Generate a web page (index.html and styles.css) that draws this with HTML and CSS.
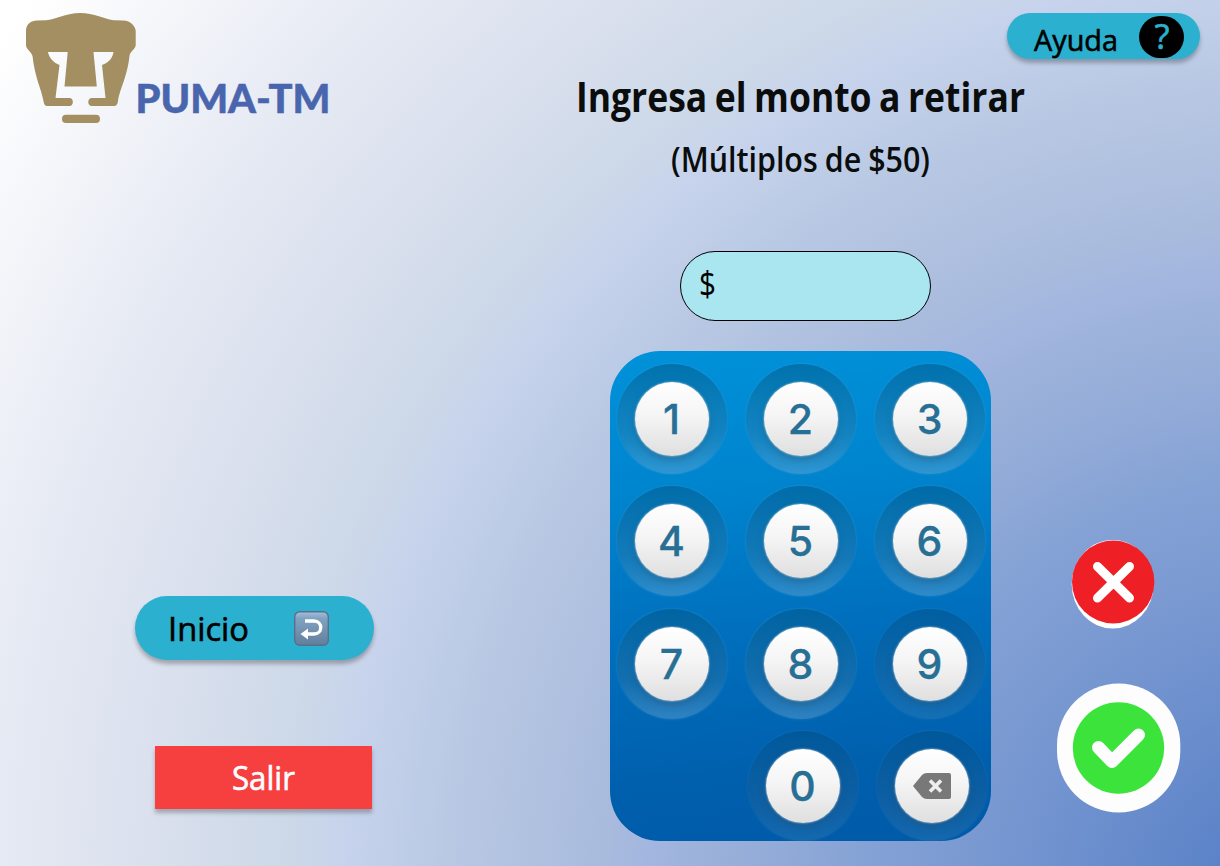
FILE: index.html
```html
<!DOCTYPE html>
<html lang="es">
<head>
<meta charset="utf-8">
<title>PUMA-TM</title>
<link rel="stylesheet" href="styles.css">
</head>
<body>
<main class="screen">
  <section class="side">
    <header class="brand">
      <svg class="logo" width="112" height="112" viewBox="25 12 112 112">
        <path fill="#a38f61" fill-rule="evenodd" d="M26 31C26 24 31 20.500 37 20.500L46 20.200C56 19.500 67 13 80 13C94 13 105 19.500 114 20.200L123 20.500C131 20.500 135.700 27 135.700 31V45C135.700 49 130 51 129.500 56C127 78 120 88 118 101Q117.500 106 114 106H92C87 106 87 98 92 98H105.500L102 65C109 63 113 57 113.500 52H93.500L96.800 86.500H64.500L67.700 52H48C49 58 54 63 59.500 65L55.500 98H69.500C74 98 74 106 69.500 106H47Q44 106 43.500 101C41 88 35 78 32.500 56C31 51 26 49 26 45Z"/>
        <rect x="62" y="114.700" width="38" height="8.300" rx="4" fill="#a38f61"/>
      </svg>
      <svg class="name" width="196" height="40"><text x="-1.500" y="31.500" textLength="195" lengthAdjust="spacingAndGlyphs">PUMA-TM</text></svg>
    </header>
    <nav class="actions">
      <button class="pill home">
        <svg width="82" height="44"><text x="-1" y="32" textLength="81" lengthAdjust="spacingAndGlyphs">Inicio</text></svg>
        <svg class="return" width="35" height="35" viewBox="0 0 35 35">
          <defs><linearGradient id="key" x2="0" y2="1"><stop stop-color="#a4c0da"/><stop offset=".2" stop-color="#82a2c2"/><stop offset="1" stop-color="#617f9b"/></linearGradient></defs>
          <rect x=".7" y=".7" width="33.600" height="33.600" rx="5" fill="url(#key)" stroke="#58708d" stroke-width="1.400"/>
          <path d="M11 10H20C29 10 29 23 20 23H13" fill="none" stroke="#fff" stroke-width="3.300"/><path d="M6.500 23L14 17.500V28.500Z" fill="#fff"/>
        </svg>
      </button>
      <button class="exit"><svg width="64" height="44"><text x="0" y="33" textLength="63" lengthAdjust="spacingAndGlyphs">Salir</text></svg></button>
    </nav>
  </section>
  <section class="entry">
    <h1><svg width="452" height="52"><text x="0" y="37" textLength="449" lengthAdjust="spacingAndGlyphs">Ingresa el monto a retirar</text></svg></h1>
    <h2><svg width="262" height="44"><text x="0" y="32" textLength="259" lengthAdjust="spacingAndGlyphs">(Múltiplos de $50)</text></svg></h2>
    <div class="amount"><svg width="20" height="44"><text x="-1" y="33" textLength="17" lengthAdjust="spacingAndGlyphs">$</text></svg></div>
    <div class="keypad">
      <button class="key"><span>1</span></button><button class="key"><span>2</span></button><button class="key"><span>3</span></button>
      <button class="key"><span>4</span></button><button class="key"><span>5</span></button><button class="key"><span>6</span></button>
      <button class="key"><span>7</span></button><button class="key"><span>8</span></button><button class="key faint"><span>9</span></button>
      <i></i><button class="key faint low"><span>0</span></button>
      <button class="key faint low"><span><svg width="38" height="26" viewBox="0 0 38 26"><path d="M0 13L9 2Q11 0 14 0H36Q38 0 38 2V24Q38 26 36 26H14Q11 26 9 24Z" fill="#787878"/><path d="M17 7.500L28 18.500M28 7.500L17 18.500" stroke="#eee" stroke-width="3.600"/></svg></span></button>
    </div>
  </section>
  <aside class="tools">
    <button class="pill help">
      <svg width="86" height="40"><text x="0" y="29" textLength="84" lengthAdjust="spacingAndGlyphs">Ayuda</text></svg>
      <span class="question"><svg width="45" height="42"><text x="15.500" y="33" textLength="15" lengthAdjust="spacingAndGlyphs">?</text></svg></span>
    </button>
    <svg class="cancel" width="84" height="90" viewBox="1071 540 84 90">
      <ellipse cx="1112.700" cy="584.300" rx="41" ry="44.300" fill="#fff"/><ellipse cx="1113.200" cy="582" rx="41.200" ry="41.500" fill="#ee1f25"/>
      <path d="M1097.500 566.500L1129.500 598M1129.500 566.500L1097.500 598" stroke="#fff" stroke-width="9" stroke-linecap="round"/>
    </svg>
    <svg class="accept" width="124" height="130" viewBox="1057 683 124 130">
      <rect x="1057" y="683.500" width="123.300" height="129" rx="61.600" fill="#fdfdfd"/><circle cx="1118.500" cy="748" r="45.700" fill="#3be33b"/>
      <path d="M1098.500 747.500L1112 761.500L1138.500 735" fill="none" stroke="#fdfdfd" stroke-width="13" stroke-linecap="round" stroke-linejoin="round"/>
    </svg>
  </aside>
</main>
</body>
</html>
```
FILE: styles.css
```css
* { box-sizing: border-box; }
body { margin: 0; font-family: "Open Sans", "Noto Sans", sans-serif; }
button { border: 0; padding: 0; font: inherit; }
svg { display: block; flex: none; overflow: visible; }
h1, h2 { margin: 0; }
.screen {
  width: 1220px; height: 866px; overflow: hidden;
  display: grid; grid-template-columns: 578px 429px 213px;
  background: radial-gradient(1557px 1507px at 1300px 900px, #5c83c8 5.600%, #7b9ad2 22%, #84a2d5 28%, #93abd8 34%, #9cb2da 39%, #a3b6df 42%, #a9bbdd 45%, #b9c9e4 55%, #c7d3ec 61.500%, #ccd8e8 65%, #dae0ee 74%, #e5e9f3 83%, #fff 101%);
}
.side { padding: 12px 0 0 25px; }
.brand { display: flex; align-items: flex-start; height: 584px; }
.name { margin-top: 69px; font: 900 40px Lato, sans-serif; fill: #4965ae; stroke: #4965ae; stroke-width: .5px; }
.actions { width: 240px; margin-left: 110px; }
.pill { background: #2bb0cf; box-shadow: 0 4px 4px rgba(0, 0, 0, .27); display: flex; }
.pill text { stroke: #000; stroke-width: .6px; }
.home { width: 239px; height: 64px; border-radius: 32px; padding: 13px 0 0 34px; font-size: 32px; }
.return { margin: 2px 0 0 43px; }
.exit { display: flex; align-items: flex-start; width: 217px; height: 63px; margin: 86px 0 0 20px; padding: 11px 0 0 77px; background: #f64040; fill: #fff; stroke: #fff; stroke-width: .6px; box-shadow: 0 4px 4px rgba(0, 0, 0, .25); font-size: 32px; }
.entry { padding-top: 75px; }
h1 { height: 65px; font-size: 41px; font-weight: 700; word-spacing: -2px; fill: #0b0d0d; margin-left: -2px; }
h2 { height: 111px; font-size: 34px; font-weight: 600; word-spacing: -1px; fill: #0b0d0d; margin-left: 93px; }
.amount { width: 251px; height: 70px; margin-left: 102px; padding: 11px 0 0 19px; border: 1px solid #000; border-radius: 35px; background: #a9e6f0; font-size: 34px; }
.keypad {
  width: 381px; height: 490px; margin: 30px 0 0 32px; padding: 12.500px 4px 0 6.500px; overflow: hidden; border-radius: 50px;
  display: grid; grid-template-columns: 110px 110px 110px; grid-auto-rows: 110px; gap: 12.500px 19px;
  background: linear-gradient(174deg, #0092da, #0084ce 28%, #006fbd 56%, #0060ae 82%, #005aa8);
}
.key {
  width: 110px; height: 110px; border-radius: 50%; display: flex; align-items: center; justify-content: center;
  background: linear-gradient(#00558480, #48779444 65%, #82b5d85c); box-shadow: 0 0 2px 1px #56a5d033;
}
.faint { background: linear-gradient(#004d8580, #37659044 65%, #5b98c338); box-shadow: 0 0 2px 1px #56a5d01c; }
.low { transform: translate(2px, 0); }
.key span {
  width: 74px; height: 74px; border-radius: 50%; display: flex; align-items: center; justify-content: center;
  background: linear-gradient(#fff, #f5f5f5 45%, #dfdfdf); box-shadow: 0 0 2px #e4edf2, 0 4px 7px #244e6b66;
  color: #286f96; font: 500 41px Inter, sans-serif; -webkit-text-stroke: .3px #286f96;
}
.tools { padding-top: 13px; }
.help { width: 193px; height: 46px; border-radius: 23px; padding: 3px 0 0 27px; font-size: 29px; }
.help > svg { margin-top: 6px; }
.question { width: 45px; height: 42px; margin-left: 19px; border-radius: 21px; background: #000; fill: #2bb0cf; font-size: 34px; }
.question text { stroke: #2bb0cf; }
.cancel { margin: 481px 0 0 64px; }
.accept { margin: 53px 0 0 50px; }
```
